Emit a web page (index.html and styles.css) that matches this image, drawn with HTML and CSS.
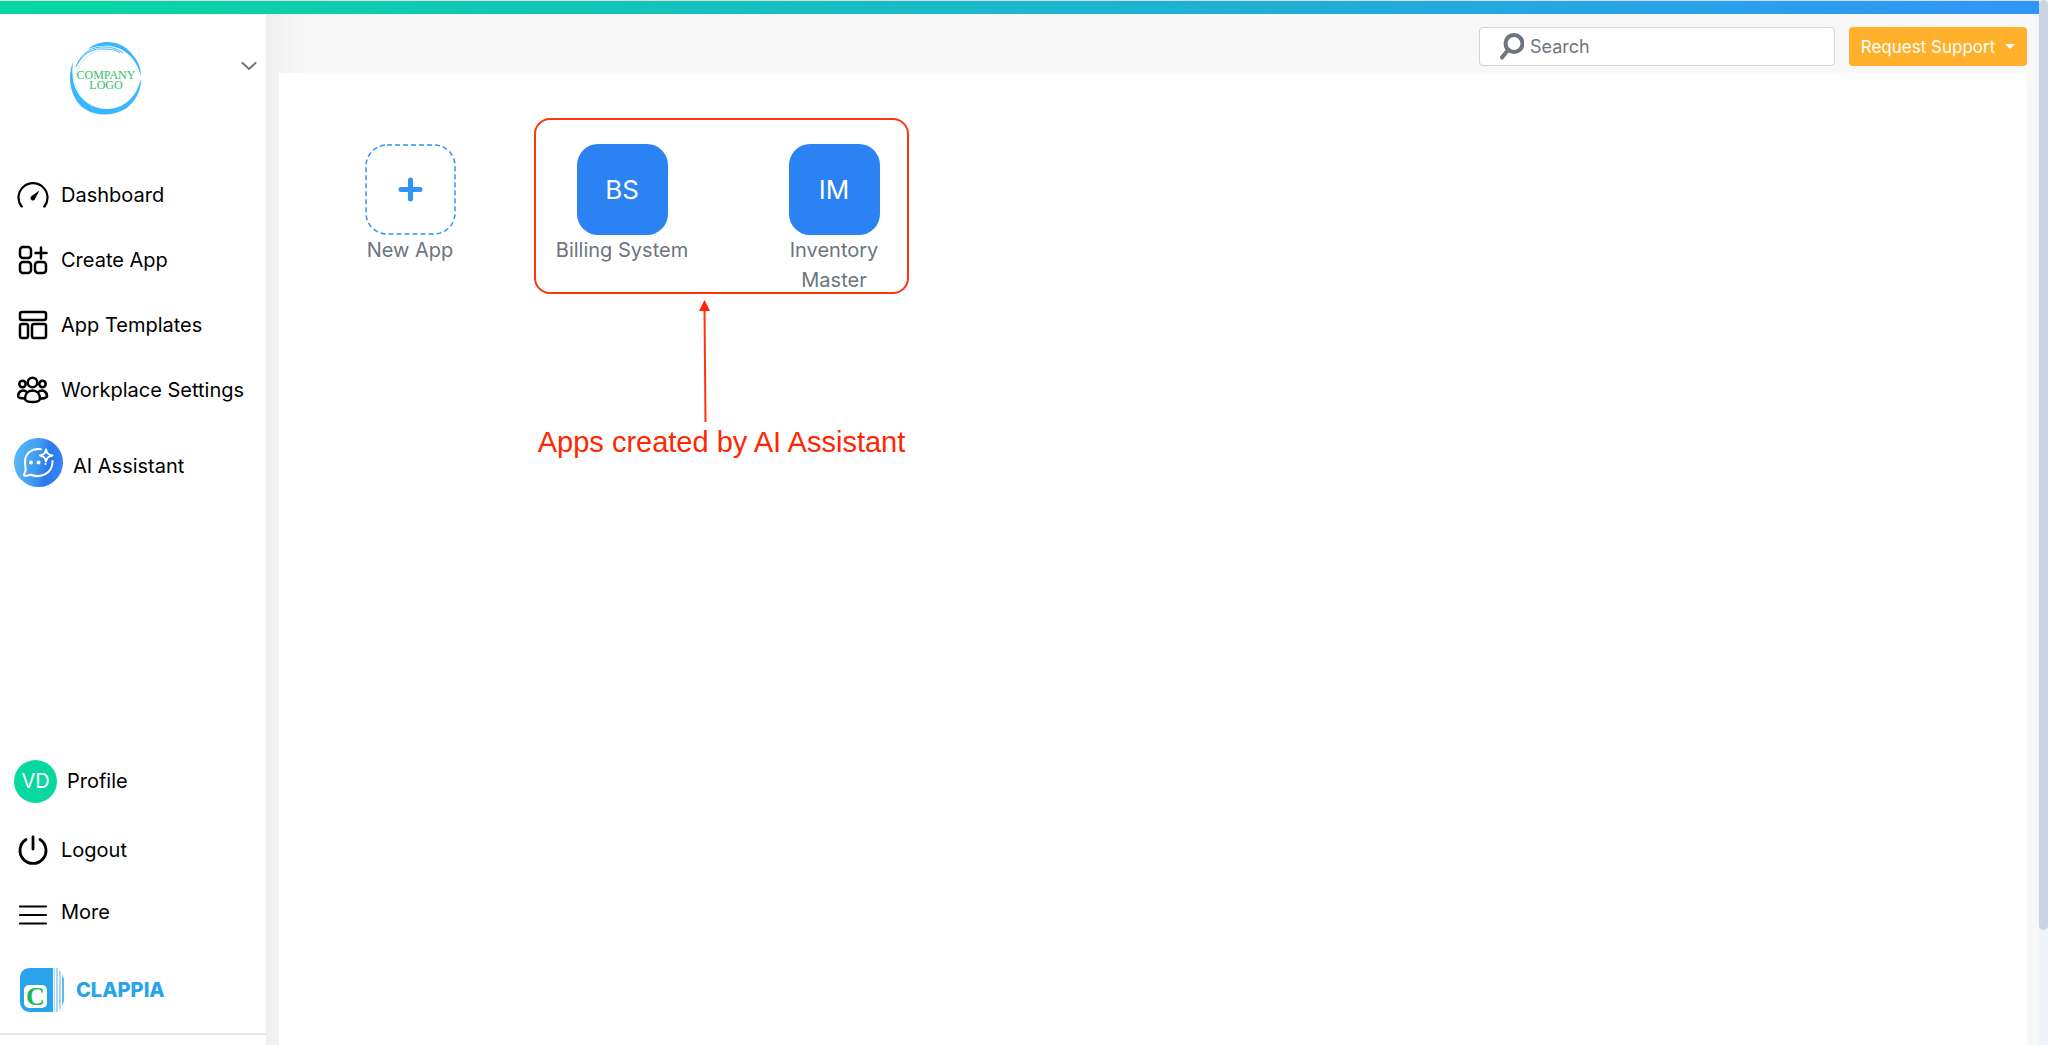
FILE: index.html
```html
<!DOCTYPE html>
<html lang="en">
<head>
    <meta charset="UTF-8">
    <meta name="viewport" content="width=device-width, initial-scale=1.0">
    <title>Clappia</title>
    <link rel="stylesheet" href="styles.css">
</head>
<body>
    <div class="page">
        <div class="topbar"></div>
        <div class="layout">

            <!-- sidebar -->
            <aside class="sidebar">
                <div class="workplace">
                    <svg class="company-logo" viewBox="0 0 74 74" role="img" aria-label="Company logo">
                        <path fill="#38b6ff" d="M19 8C31-2 51-2 63 13c7 8 9 15 9 22-3-10-7-17-13-22C48 3 32 3 19 8z"/>
                        <path fill="#38b6ff" d="M4 21C-2 36 1 55 13 66c15 12 39 9 50-4 7-8 9-16 9-24l-2 6c-3 9-10 17-18 21-10 4-21 4-30-1C9 57 1 44 4 21z"/>
                        <path fill="none" stroke="#38b6ff" d="M7 26C12 12 23 5 36 6c8 0 14 3 18 6M9 22C16 11 25 7 35 8c8 0 12 1 16 4"/>
                        <path fill="none" stroke="#9bdbff" stroke-width=".6" d="M6 42c2 10 8 18 18 24M7 33c4-12 12-21 24-23"/>
                        <text x="37" y="38" text-anchor="middle">COMPANY</text>
                        <text x="37" y="48" text-anchor="middle">LOGO</text>
                    </svg>
                    <button class="switch" aria-label="Switch workplace">
                        <svg width="16" height="10" viewBox="0 0 16 10"><path d="M1.500 2l6.500 6 6.500-6"/></svg>
                    </button>
                </div>

                <nav class="menu">
                    <a href="#">
                        <svg class="icon" viewBox="0 0 32 32">
                            <path d="M5 27.500H4.500A14.500 14.500 0 1 1 27.500 27.500H27" stroke-width="2.200"/>
                            <path d="M22.500 11.500L18.200 19.500a2.400 2.400 0 1 1-4-2.200z" fill="#000" stroke="none"/>
                        </svg>
                        Dashboard
                    </a>
                    <a href="#">
                        <svg class="icon" viewBox="0 0 32 32">
                            <rect x="3" y="3" width="11" height="11" rx="3"/>
                            <rect x="3" y="18" width="11" height="11" rx="3"/>
                            <rect x="18" y="18" width="11" height="11" rx="3"/>
                            <path d="M24 3.500v11M18.500 9h11"/>
                        </svg>
                        Create App
                    </a>
                    <a href="#">
                        <svg class="icon" viewBox="0 0 32 32">
                            <rect x="3" y="3" width="26" height="8" rx="2"/>
                            <rect x="3" y="15" width="8" height="14" rx="2"/>
                            <rect x="15" y="15" width="14" height="14" rx="2"/>
                        </svg>
                        App Templates
                    </a>
                    <a href="#">
                        <svg class="icon" viewBox="0 0 32 32">
                            <circle cx="15.500" cy="8.500" r="4.800"/>
                            <circle cx="5.500" cy="10" r="3.200"/>
                            <circle cx="25.500" cy="10" r="3.200"/>
                            <path d="M8 25c0-5 3-8.500 7.500-8.500s7.500 3.500 7.500 8.500c-1 4-14 4-15 0z"/>
                            <path d="M9 17.500C5.500 15 1 17.500 1 22.500c1 1.500 3.500 2 6.500 2M22 17.500C25.500 15 30 17.500 30 22.500c-1 1.500-3.500 2-6.500 2"/>
                        </svg>
                        Workplace Settings
                    </a>
                    <a href="#" class="assistant">
                        <svg width="49" height="49" viewBox="0 0 49 49">
                            <defs>
                                <linearGradient id="ai" x1="0" y1="0.400" x2="1" y2="0.600">
                                    <stop offset="0" stop-color="#56b9f6"/>
                                    <stop offset=".45" stop-color="#419cee"/>
                                    <stop offset=".7" stop-color="#2978ec"/>
                                    <stop offset="1" stop-color="#3b83f9"/>
                                </linearGradient>
                            </defs>
                            <circle cx="24.500" cy="24.500" r="24.500" fill="url(#ai)"/>
                            <path fill="none" stroke="#fff" stroke-width="2" stroke-linecap="round" stroke-linejoin="round" d="M27 11.300C18 9.500 11 15.500 11 24c0 4 1 7 .5 9-.4 2-2 3-1.500 4.300.5 1 4 .2 7-.6 10 4 21-1.200 21.500-12.700v-1"/>
                            <path fill="none" stroke="#fff" stroke-width="2" stroke-linejoin="round" d="M32 11.500c1 4 2 5 6.500 6-4.500 1-5.500 2-6.500 6-1-4-2-5-6-6 4-1 5-2 6-6z"/>
                            <circle cx="17" cy="24.500" r="2" fill="#fff"/>
                            <circle cx="24.500" cy="24.500" r="2" fill="#fff"/>
                            <circle cx="31.500" cy="26" r="1" fill="#fff"/>
                        </svg>
                        <span>AI Assistant</span>
                    </a>
                </nav>

                <nav class="menu menu-bottom">
                    <a href="#" class="profile"><span class="avatar">VD</span>Profile</a>
                    <a href="#">
                        <svg class="icon" viewBox="0 0 32 32">
                            <path d="M16 3v12M9 5.500a13 13 0 1 0 14 0" stroke-width="2.800"/>
                        </svg>
                        Logout
                    </a>
                    <a href="#">
                        <svg class="icon" viewBox="0 0 32 32">
                            <path d="M3 10.500h26M3 19h26M3 27.500h26" stroke-width="2.200"/>
                        </svg>
                        More
                    </a>
                </nav>

                <a href="#" class="brand">
                    <svg width="44" height="44" viewBox="0 0 44 44" aria-hidden="true">
                        <path fill="#29a3ec" d="M10 0h23v44H10C4 44 0 39 0 34V10C0 4 4 0 10 0z"/>
                        <path fill="#a8daf8" d="M34 0h1v44h-1zM36 0h2v44h-2zM39 2l2 2v36l-2 2z"/>
                        <path fill="#5fbaf2" d="M42 6l2 5v22l-2 5z"/>
                        <rect x="4" y="17" width="23" height="23" rx="5" fill="#fff"/>
                        <text x="15.500" y="37" text-anchor="middle">C</text>
                    </svg>
                    CLAPPIA
                </a>
            </aside>

            <!-- content -->
            <main class="main">
                <header class="header">
                    <label class="search">
                        <svg width="26" height="28" viewBox="0 0 26 28" aria-hidden="true">
                            <circle cx="16" cy="10.500" r="8.500"/>
                            <path d="M10 17L4 24.500" stroke-linecap="round"/>
                        </svg>
                        <input type="text" placeholder="Search" aria-label="Search">
                    </label>
                    <button class="support">Request Support <span class="caret"></span></button>
                </header>

                <section class="workspace">
                    <a href="#" class="app">
                        <span class="tile tile-new">
                            <svg width="91" height="91" viewBox="0 0 91 91">
                                <rect class="dashes" x="1" y="1" width="89" height="89" rx="21"/>
                                <path d="M45.500 36v19M36 45.500h19"/>
                            </svg>
                        </span>
                        <span class="name">New App</span>
                    </a>
                    <a href="#" class="app">
                        <span class="tile">BS</span>
                        <span class="name">Billing System</span>
                    </a>
                    <a href="#" class="app">
                        <span class="tile">IM</span>
                        <span class="name">Inventory Master</span>
                    </a>

                    <!-- callout over the two generated apps -->
                    <div class="callout">
                        <div class="frame"></div>
                        <svg width="12" height="122" viewBox="0 0 12 122" aria-hidden="true">
                            <path d="M5.500 8L6.500 122" stroke="#ff3510" stroke-width="2"/>
                            <path d="M5.500 0L11 11H0z" fill="#ff2600"/>
                        </svg>
                        <p>Apps created by AI Assistant</p>
                    </div>
                </section>
            </main>
        </div>
    </div>
    <div class="scrollbar"><div class="thumb"></div></div>
</body>
</html>
```

FILE: styles.css
```css
*{
    margin: 0;
    padding: 0;
    box-sizing: border-box;
}
body{
    display: flex;
    min-height: 100vh;
    background: #fff;
    font-family: Inter, "Liberation Sans", sans-serif;
    font-size: 20px;
    line-height: 30px;
    color: #000;
}
a{
    color: inherit;
    text-decoration: none;
}
button,input{
    border: none;
    outline: none;
    background: transparent;
    font-family: inherit;
}
.page{
    flex: 1;
    display: flex;
    flex-direction: column;
}
.topbar{
    height: 14px;
    border-top: 1px solid #dcdcdc;
    background: linear-gradient(90deg,#07d8a0,#2f96f7);
}
.layout{
    flex: 1;
    display: flex;
}

/* sidebar */
.sidebar{
    width: 266px;
    display: flex;
    flex-direction: column;
    padding-bottom: 10px;
    background: #fff;
}
.workplace{
    display: flex;
    justify-content: space-between;
    align-items: flex-start;
    padding: 27px 9px 0 69px;
}
.company-logo{
    width: 74px;
    height: 74px;
}
.company-logo text{
    font-family: "Liberation Serif", serif;
    font-size: 12px;
    fill: #2fc065;
}
.switch{
    height: 50px;
    display: flex;
    align-items: center;
}
.switch path{
    fill: none;
    stroke: #6c757d;
    stroke-width: 2;
    stroke-linecap: round;
}
.menu{
    display: flex;
    flex-direction: column;
    padding: 47px 0 0 17px;
}
.menu a{
    height: 65px;
    display: flex;
    align-items: center;
    gap: 12px;
    font-size: 20px;
}
.icon{
    width: 32px;
    height: 32px;
    fill: none;
    stroke: #000;
    stroke-width: 2.5;
    stroke-linecap: round;
    stroke-linejoin: round;
}
.menu .assistant{
    height: 80px;
    gap: 10px;
    margin-left: -3px;
}
.assistant span{
    padding-top: 8px;
}
.menu-bottom{
    margin-top: auto;
    padding-top: 0;
}
.menu-bottom a{
    height: 62px;
}
.menu .profile{
    gap: 10px;
    height: 76px;
    margin-left: -3px;
}
.avatar{
    width: 43px;
    height: 43px;
    border-radius: 50%;
    background: #07d8a0;
    color: #fff;
    line-height: 43px;
    text-align: center;
}
.brand{
    display: flex;
    align-items: center;
    gap: 12px;
    height: 92px;
    padding: 4px 0 0 20px;
    border-bottom: 2px solid #e6e6e6;
    color: #29a3ec;
    font-size: 20px;
    font-weight: 800;
}
.brand text{
    font-family: "Liberation Serif", serif;
    font-size: 26px;
    font-weight: 700;
    fill: #12b85c;
}

/* content */
.main{
    flex: 1;
    display: flex;
    flex-direction: column;
    padding: 0 12px 0 13px;
    background: linear-gradient(90deg,#efefef,#f2f2f2 13px,#f8f8f8 36px);
}
.header{
    height: 59px;
    display: flex;
    justify-content: flex-end;
    align-items: center;
    gap: 14px;
    padding-top: 6px;
}
.search{
    width: 356px;
    height: 39px;
    display: flex;
    align-items: center;
    gap: 6px;
    padding-left: 18px;
    border: 1px solid #ced4da;
    border-radius: 4px;
    background: #fff;
}
.search svg{
    fill: none;
    stroke: #6c757d;
    stroke-width: 4;
}
.search input{
    flex: 1;
    min-width: 0;
    font-size: 18px;
}
.search input::placeholder{
    color: #6c757d;
}
.support{
    width: 178px;
    height: 39px;
    display: flex;
    align-items: center;
    justify-content: center;
    gap: 10px;
    border-radius: 4px;
    background: #ffb12c;
    color: #fff;
    font-size: 17px;
}
.caret{
    border-top: 5px solid #fff;
    border-left: 5px solid transparent;
    border-right: 5px solid transparent;
}
.workspace{
    flex: 1;
    position: relative;
    display: flex;
    align-items: flex-start;
    padding: 71px 25px 0;
    background: #fff;
}
.app{
    width: 212px;
    display: flex;
    flex-direction: column;
    align-items: center;
    color: #6c757d;
}
.tile{
    width: 91px;
    height: 91px;
    display: flex;
    align-items: center;
    justify-content: center;
    border-radius: 21px;
    background: #2b82f3;
    color: #fff;
    font-size: 26px;
}
.tile-new{
    background: #fff;
}
.tile-new path{
    stroke: #2f96f7;
    stroke-width: 5;
    stroke-linecap: round;
}
.tile-new .dashes{
    fill: none;
    stroke: #2f96f7;
    stroke-width: 1.5;
    stroke-dasharray: 5 3;
}
.name{
    max-width: 140px;
    text-align: center;
}
.callout{
    position: absolute;
    top: 45px;
    left: 255px;
    width: 375px;
    display: flex;
    flex-direction: column;
    align-items: center;
    gap: 6px;
    color: #ff2600;
    pointer-events: none;
}
.callout svg{
    margin-right: 34px;
}
.callout p{
    font-family: "Liberation Sans", Arial, sans-serif;
    font-size: 29px;
    line-height: 28px;
    white-space: nowrap;
}
.frame{
    width: 100%;
    height: 176px;
    border: 2px solid #ff3510;
    border-radius: 16px;
}

/* page scroll track */
.scrollbar{
    width: 9px;
    background: #f1f5f9;
}
.thumb{
    height: 89vh;
    border-radius: 5px;
    background: #cbd5e1;
}
```
